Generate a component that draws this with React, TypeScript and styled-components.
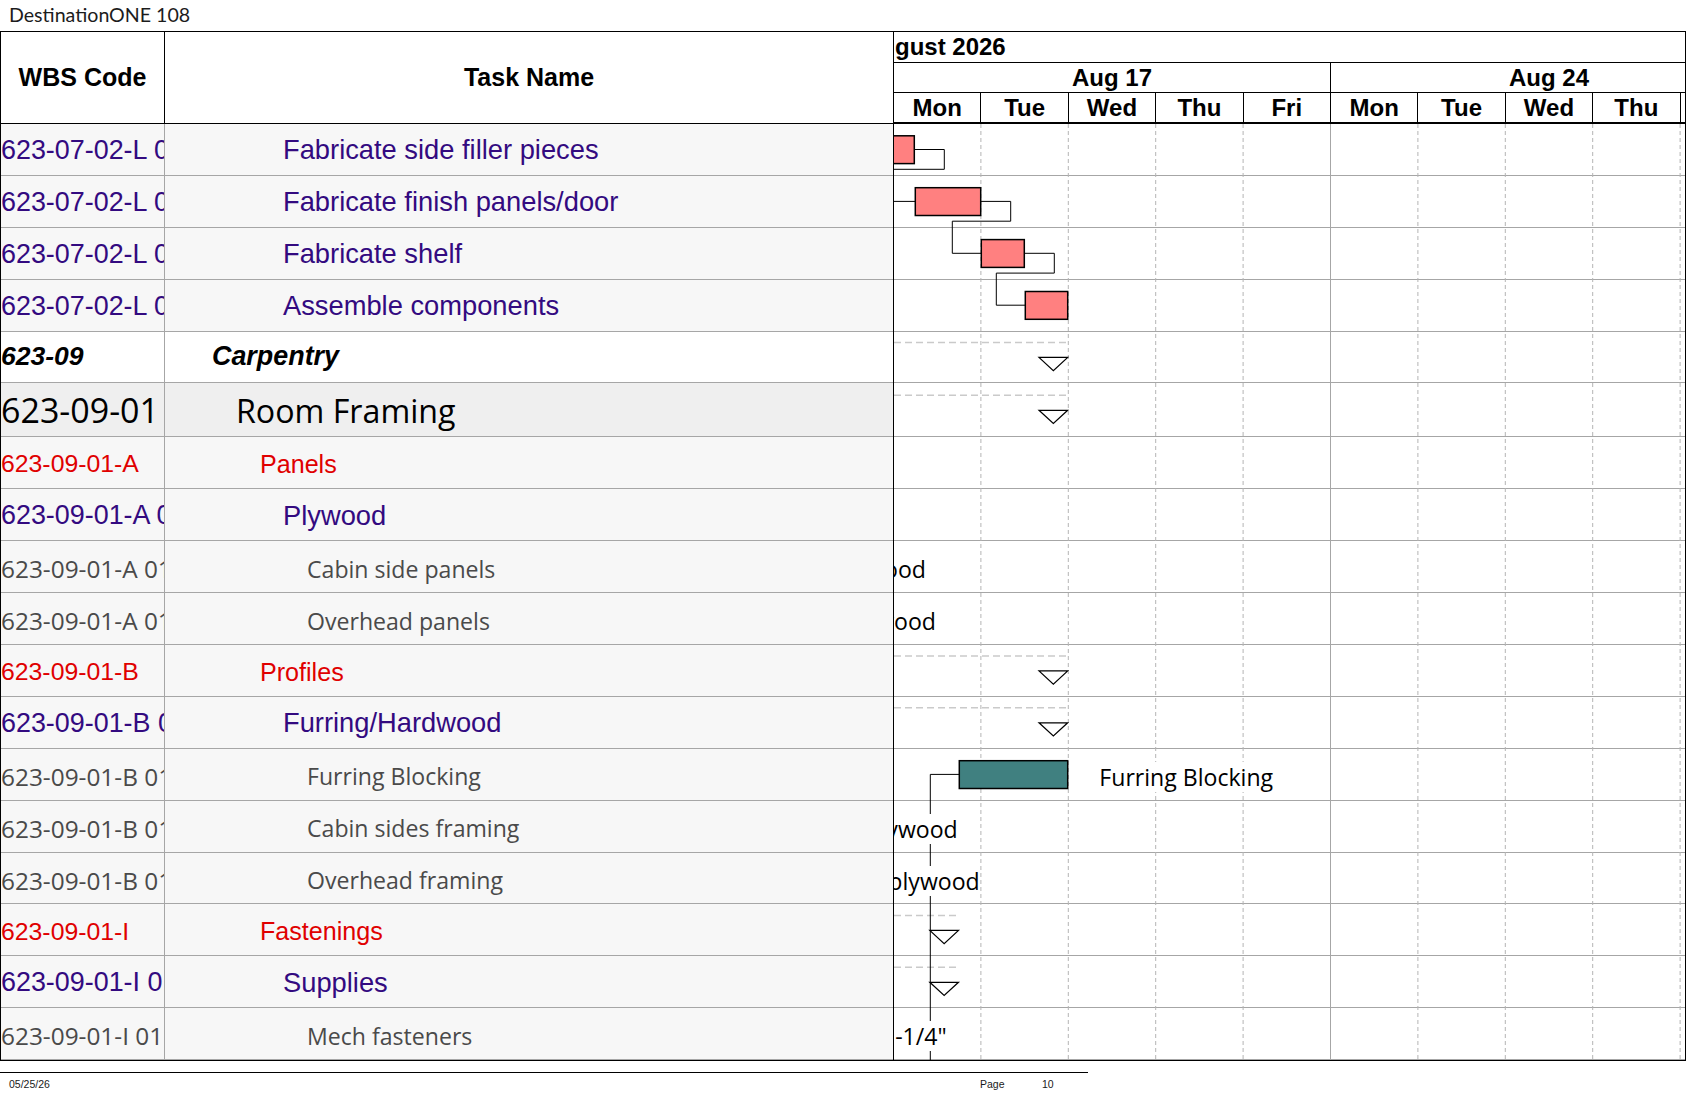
import React from 'react';
import styled, { createGlobalStyle, css } from 'styled-components';

const ARIAL = '"Liberation Sans", Arial, sans-serif';
const SEGOE = '"Open Sans", "Noto Sans", sans-serif';

const DAY = 87.4;
const ROW = 51.9;
const ROOM_ROW = 54;
const CHART_INNER = 791;

type Tone = 'task' | 'section' | 'room' | 'group' | 'leaf';

interface ToneStyle {
  family: string;
  wbsSize: number;
  nameSize: number;
  color: string;
  bg: string;
  indent: number;
  weight: number;
  italic: boolean;
  nudge: number;
}

const tones: Record<Tone, ToneStyle> = {
  task: { family: ARIAL, wbsSize: 26.9, nameSize: 27.3, color: '#330a80', bg: '#f7f7f7', indent: 118, weight: 400, italic: false, nudge: 1 },
  section: { family: ARIAL, wbsSize: 26.5, nameSize: 26.9, color: '#000', bg: '#fff', indent: 47, weight: 700, italic: true, nudge: -0.8 },
  room: { family: SEGOE, wbsSize: 34, nameSize: 32.2, color: '#000', bg: '#efefef', indent: 71, weight: 400, italic: false, nudge: 0.5 },
  group: { family: ARIAL, wbsSize: 24.8, nameSize: 25.1, color: '#e00000', bg: '#f7f7f7', indent: 95, weight: 400, italic: false, nudge: 1.6 },
  leaf: { family: SEGOE, wbsSize: 24.4, nameSize: 23.1, color: '#4a4a4a', bg: '#f7f7f7', indent: 142, weight: 400, italic: false, nudge: 2 },
};

interface Row {
  wbs: string;
  name: string;
  tone: Tone;
}

const rows: Row[] = [
  { wbs: '623-07-02-L 01.1', name: 'Fabricate side filler pieces', tone: 'task' },
  { wbs: '623-07-02-L 01.2', name: 'Fabricate finish panels/door', tone: 'task' },
  { wbs: '623-07-02-L 01.3', name: 'Fabricate shelf', tone: 'task' },
  { wbs: '623-07-02-L 01.4', name: 'Assemble components', tone: 'task' },
  { wbs: '623-09', name: 'Carpentry', tone: 'section' },
  { wbs: '623-09-01', name: 'Room Framing', tone: 'room' },
  { wbs: '623-09-01-A', name: 'Panels', tone: 'group' },
  { wbs: '623-09-01-A 01', name: 'Plywood', tone: 'task' },
  { wbs: '623-09-01-A 01.1', name: 'Cabin side panels', tone: 'leaf' },
  { wbs: '623-09-01-A 01.2', name: 'Overhead panels', tone: 'leaf' },
  { wbs: '623-09-01-B', name: 'Profiles', tone: 'group' },
  { wbs: '623-09-01-B 01', name: 'Furring/Hardwood', tone: 'task' },
  { wbs: '623-09-01-B 01.1', name: 'Furring Blocking', tone: 'leaf' },
  { wbs: '623-09-01-B 01.2', name: 'Cabin sides framing', tone: 'leaf' },
  { wbs: '623-09-01-B 01.3', name: 'Overhead framing', tone: 'leaf' },
  { wbs: '623-09-01-I', name: 'Fastenings', tone: 'group' },
  { wbs: '623-09-01-I 01', name: 'Supplies', tone: 'task' },
  { wbs: '623-09-01-I 01.1', name: 'Mech fasteners', tone: 'leaf' },
];

const rowHeight = (r: Row) => (r.tone === 'room' ? ROOM_ROW : ROW);

const rowTops: number[] = [];
rows.reduce((y, r) => {
  rowTops.push(y);
  return y + rowHeight(r);
}, 0);
const bodyHeight = rows.reduce((y, r) => y + rowHeight(r), 0);
const mid = (i: number) => rowTops[i] + 25.5;

const weeks = ['Aug 17', 'Aug 24'];
const days = ['Mon', 'Tue', 'Wed', 'Thu', 'Fri', 'Mon', 'Tue', 'Wed', 'Thu', 'Fri'];

const tasks = [
  { row: 0, x1: -30, x2: 20.3 },
  { row: 1, x1: 21.3, x2: 86.7 },
  { row: 2, x1: 87.3, x2: 130.3 },
  { row: 3, x1: 131.3, x2: 173.7 },
];

const summaries = [
  { row: 4, end: 173.7 },
  { row: 5, end: 173.7 },
  { row: 10, end: 173.7 },
  { row: 11, end: 173.7 },
  { row: 15, end: 64.5 },
  { row: 16, end: 64.5 },
];

const tailLabels = [
  { row: 8, text: '1/2" Plywood', end: 32 },
  { row: 9, text: '3/4" Plywood', end: 42 },
  { row: 13, text: '1/2" plywood', end: 63.7 },
  { row: 14, text: '3/4" plywood', end: 85.7 },
  { row: 17, text: 'Screws #8 x 1-1/4"', end: 52.7 },
];

const GlobalStyle = createGlobalStyle`
  html, body {
    margin: 0;
    padding: 0;
    background: #fff;
  }
  body {
    font-family: ${ARIAL};
    color: #000;
  }
  * {
    box-sizing: border-box;
  }
`;

const Page = styled.div`
  width: 1687px;
  height: 1097px;
  overflow: hidden;
  background: #fff;
`;

const Title = styled.div`
  height: 31px;
  padding: 3px 0 0 9px;
  font-family: Lato, "Liberation Sans", sans-serif;
  font-size: 19.6px;
  line-height: 24px;
  color: #1c1c1c;
`;

const Sheet = styled.div`
  display: flex;
  width: 1686px;
  border-top: 1px solid #000;
  border-bottom: 1px solid #000;
  border-left: 1px solid #000;
`;

const Grid = styled.div`
  width: 893px;
  flex-shrink: 0;
  border-right: 1px solid #000;
`;

const GridHeader = styled.div`
  display: grid;
  grid-template-columns: 164px 1fr;
  height: 92px;
  border-bottom: 1px solid #000;
`;

const HeaderCell = styled.div<{ $divider?: boolean }>`
  display: flex;
  align-items: center;
  justify-content: center;
  font-family: ${ARIAL};
  font-weight: 700;
  font-size: 25px;
  border-right: ${(p) => (p.$divider ? '1px solid #000' : 'none')};
`;

const cellFont = (t: ToneStyle, size: number) => css`
  font-family: ${t.family};
  font-size: ${size}px;
  font-weight: ${t.weight};
  font-style: ${t.italic ? 'italic' : 'normal'};
  color: ${t.color};
  padding-top: ${Math.max(0, t.nudge * 2)}px;
  padding-bottom: ${Math.max(0, -t.nudge * 2)}px;
`;

const GridRow = styled.div<{ $tone: Tone }>`
  display: grid;
  grid-template-columns: 164px 1fr;
  height: ${(p) => (p.$tone === 'room' ? ROOM_ROW : ROW)}px;
  border-bottom: 1px solid #a6a6a6;
  background: ${(p) => tones[p.$tone].bg};
`;

const WbsCell = styled.div<{ $tone: Tone }>`
  display: flex;
  align-items: center;
  overflow: hidden;
  white-space: nowrap;
  border-right: 1px solid #a6a6a6;
  ${(p) => cellFont(tones[p.$tone], tones[p.$tone].wbsSize)}
`;

const NameCell = styled.div<{ $tone: Tone }>`
  display: flex;
  align-items: center;
  overflow: hidden;
  white-space: nowrap;
  padding-left: ${(p) => tones[p.$tone].indent}px;
  ${(p) => cellFont(tones[p.$tone], tones[p.$tone].nameSize)}
`;

const Chart = styled.div`
  width: 792px;
  flex-shrink: 0;
  border-right: 1px solid #000;
  overflow: hidden;
`;

const MonthRow = styled.div`
  height: 31px;
  border-bottom: 1px solid #000;
  overflow: hidden;
  white-space: nowrap;
  font-weight: 700;
  font-size: 24px;
  line-height: 30px;
`;

const MonthLabel = styled.span`
  display: inline-block;
  margin-left: -31px;
`;

const ScaleRow = styled.div<{ $thick?: boolean }>`
  display: flex;
  height: ${(p) => (p.$thick ? 31 : 30)}px;
  border-bottom: ${(p) => (p.$thick ? 2 : 1)}px solid #000;
  overflow: hidden;
`;

const ScaleCell = styled.div<{ $span: number }>`
  width: ${(p) => DAY * p.$span}px;
  flex-shrink: 0;
  border-right: 1px solid #000;
  text-align: center;
  white-space: nowrap;
  font-weight: 700;
  font-size: 24px;
  line-height: 29px;
`;

const ChartBody = styled.div`
  position: relative;
  height: ${bodyHeight}px;
  overflow: hidden;
`;

const ChartRow = styled.div<{ $tall: boolean }>`
  height: ${(p) => (p.$tall ? ROOM_ROW : ROW)}px;
  border-bottom: 1px solid #a6a6a6;
`;

const Overlay = styled.svg`
  position: absolute;
  top: 0;
  left: 0;
  pointer-events: none;
`;

const BarLabel = styled.span`
  position: absolute;
  font-family: ${SEGOE};
  font-size: 23.1px;
  line-height: 30px;
  color: #000;
  background: #fff;
  white-space: nowrap;
`;

const Footer = styled.div`
  display: grid;
  grid-template-columns: 971px 62px auto;
  width: 1088px;
  margin-top: 11px;
  padding: 5px 0 0 9px;
  border-top: 1px solid #000;
  font-family: ${ARIAL};
  font-size: 10.5px;
  line-height: 13px;
  color: #1a1a1a;
`;

const GanttDrawing: React.FC = () => {
  const lines = Array.from({ length: 9 }, (_, i) => i + 1);
  return (
    <Overlay width={CHART_INNER} height={bodyHeight}>
      {lines.map((k) => (
        <line
          key={k}
          x1={DAY * k - 0.5}
          x2={DAY * k - 0.5}
          y1={0}
          y2={bodyHeight}
          stroke={k % 5 === 0 ? '#a6a6a6' : '#b4b4b4'}
          strokeWidth={1}
          strokeDasharray={k % 5 === 0 ? undefined : '4 3'}
        />
      ))}

      {summaries.map((s) => {
        const top = rowTops[s.row] + (rows[s.row].tone === 'room' ? 1 : 0);
        return (
          <g key={s.row}>
            <line x1={0} x2={s.end} y1={top + 10.8} y2={top + 10.8} stroke="#cacaca" strokeWidth={1.5} strokeDasharray="7 4" />
            <polygon
              points={`${s.end - 28.7},${top + 25.8} ${s.end},${top + 25.8} ${s.end - 14.35},${top + 39}`}
              fill="#fff"
              stroke="#000"
              strokeWidth={1.2}
            />
          </g>
        );
      })}

      {tasks.slice(0, -1).map((a, i) => {
        const b = tasks[i + 1];
        const turn = rowTops[a.row] + 45.3;
        const pts = [
          [a.x2, mid(a.row)],
          [a.x2 + 30, mid(a.row)],
          [a.x2 + 30, turn],
          [b.x1 - 29, turn],
          [b.x1 - 29, mid(b.row)],
          [b.x1, mid(b.row)],
        ];
        return <polyline key={i} points={pts.map((p) => p.join(',')).join(' ')} fill="none" stroke="#000" strokeWidth={1} />;
      })}

      <polyline points={`65.3,${mid(12)} 36.3,${mid(12)} 36.3,${bodyHeight + 2}`} fill="none" stroke="#000" strokeWidth={1} />

      {tasks.map((t) => (
        <rect key={t.row} x={t.x1} y={rowTops[t.row] + 11.8} width={t.x2 - t.x1} height={27.8} fill="#ff8080" stroke="#000" strokeWidth={1.5} />
      ))}
      <rect x={65.3} y={rowTops[12] + 11.8} width={108.4} height={27.8} fill="#408080" stroke="#000" strokeWidth={1.5} />
    </Overlay>
  );
};

const App: React.FC = () => (
  <Page>
    <GlobalStyle />
    <Title>DestinationONE 108</Title>
    <Sheet>
      <Grid>
        <GridHeader>
          <HeaderCell $divider>WBS Code</HeaderCell>
          <HeaderCell>Task Name</HeaderCell>
        </GridHeader>
        {rows.map((r, i) => (
          <GridRow key={i} $tone={r.tone}>
            <WbsCell $tone={r.tone}>{r.wbs}</WbsCell>
            <NameCell $tone={r.tone}>{r.name}</NameCell>
          </GridRow>
        ))}
      </Grid>

      <Chart>
        <MonthRow>
          <MonthLabel>August 2026</MonthLabel>
        </MonthRow>
        <ScaleRow>
          {weeks.map((w) => (
            <ScaleCell key={w} $span={5}>{w}</ScaleCell>
          ))}
        </ScaleRow>
        <ScaleRow $thick>
          {days.map((d, i) => (
            <ScaleCell key={i} $span={1}>{d}</ScaleCell>
          ))}
        </ScaleRow>
        <ChartBody>
          {rows.map((r, i) => (
            <ChartRow key={i} $tall={r.tone === 'room'} />
          ))}
          <GanttDrawing />
          {tailLabels.map((l) => (
            <BarLabel key={l.row} style={{ top: rowTops[l.row] + 13, right: CHART_INNER - l.end }}>
              {l.text}
            </BarLabel>
          ))}
          <BarLabel style={{ top: rowTops[12] + 13.5, left: 205.3 }}>Furring Blocking</BarLabel>
        </ChartBody>
      </Chart>
    </Sheet>
    <Footer>
      <span>05/25/26</span>
      <span>Page</span>
      <span>10</span>
    </Footer>
  </Page>
);

export default App;
